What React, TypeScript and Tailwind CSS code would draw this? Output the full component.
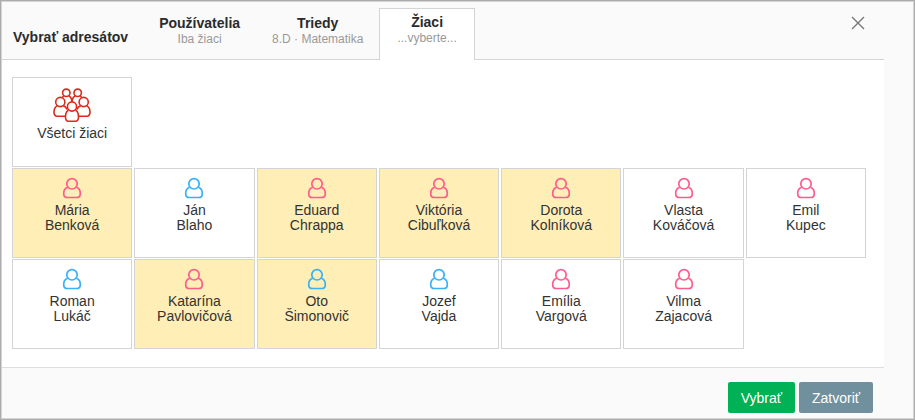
import { useState } from 'react'

type Student = {
  first: string
  last: string
  color: string
  selected: boolean
}

const PINK = '#ff5c8d'
const BLUE = '#38b1f5'

const initialStudents: Student[] = [
  { first: 'Mária', last: 'Benková', color: PINK, selected: true },
  { first: 'Ján', last: 'Blaho', color: BLUE, selected: false },
  { first: 'Eduard', last: 'Chrappa', color: PINK, selected: true },
  { first: 'Viktória', last: 'Cibuľková', color: PINK, selected: true },
  { first: 'Dorota', last: 'Kolníková', color: PINK, selected: true },
  { first: 'Vlasta', last: 'Kováčová', color: PINK, selected: false },
  { first: 'Emil', last: 'Kupec', color: PINK, selected: false },
  { first: 'Roman', last: 'Lukáč', color: BLUE, selected: false },
  { first: 'Katarína', last: 'Pavlovičová', color: PINK, selected: true },
  { first: 'Oto', last: 'Šimonovič', color: BLUE, selected: true },
  { first: 'Jozef', last: 'Vajda', color: BLUE, selected: false },
  { first: 'Emília', last: 'Vargová', color: PINK, selected: false },
  { first: 'Vilma', last: 'Zajacová', color: PINK, selected: false },
]

const tabs = [
  { title: 'Používatelia', subtitle: 'Iba žiaci' },
  { title: 'Triedy', subtitle: '8.D · Matematika' },
  { title: 'Žiaci', subtitle: '...vyberte...' },
]

export default function App() {
  const [students, setStudents] = useState(initialStudents)
  const [active, setActive] = useState(2)

  const toggle = (index: number) => {
    setStudents(students.map((s, i) => (i === index ? { ...s, selected: !s.selected } : s)))
  }

  const toggleAll = () => {
    const all = students.every((s) => s.selected)
    setStudents(students.map((s) => ({ ...s, selected: !all })))
  }

  return (
    <div className="min-h-screen border border-[#acacac] font-['Liberation_Sans',Arial,sans-serif] text-sm text-[#333]">
      <div className="flex min-h-[calc(100vh-2px)] flex-col border border-[#d4d4d4] bg-[#fafafa] pr-[29px]">
        <header className="flex h-[58px] items-stretch border-b border-[#d3d4d5]">
          <h1 className="mr-[15px] self-end pb-[14px] pl-[11px] text-sm leading-4 font-bold text-[#292b2c]">
            Vybrať adresátov
          </h1>
          <div role="tablist" className="-mb-px flex items-stretch pt-1.5">
            {tabs.map((tab, i) => (
              <button
                key={tab.title}
                role="tab"
                aria-selected={i === active}
                onClick={() => setActive(i)}
                className={
                  i === active
                    ? 'flex flex-col items-center border border-b-0 border-[#d3d4d5] bg-white px-[17px] pt-[5px]'
                    : 'flex flex-col items-center px-4 pt-[7px]'
                }
              >
                <span className="text-sm leading-4 font-bold text-[#292b2c]">{tab.title}</span>
                <span className="text-xs leading-4 text-[#999]">{tab.subtitle}</span>
              </button>
            ))}
          </div>
          <button aria-label="Zavrieť" className="mt-3.5 mr-[19px] ml-auto self-start">
            <CloseIcon />
          </button>
        </header>

        <main className="flex-1 border-b border-[#dcdddd] bg-white pt-[17px] pr-[18px] pb-[18px] pl-[10px]">
          <div className="grid grid-cols-[repeat(auto-fill,minmax(120px,1fr))] gap-x-0.5 gap-y-px">
            <button
              onClick={toggleAll}
              className="col-start-1 flex h-[90px] flex-col items-center border border-[#d3d4d5] bg-white pt-[10px] leading-[15px]"
            >
              <GroupIcon />
              <span className="mt-[3px]">Všetci žiaci</span>
            </button>
            {students.map((s, i) => (
              <button
                key={s.last}
                aria-pressed={s.selected}
                onClick={() => toggle(i)}
                className={`flex h-[90px] flex-col items-center border border-[#d3d4d5] pt-2 leading-[15px] ${
                  i === 0 ? 'col-start-1' : ''
                } ${s.selected ? 'bg-[#ffeeb5]' : 'bg-white'}`}
              >
                <PersonIcon color={s.color} />
                <span className="mt-1">{s.first}</span>
                <span>{s.last}</span>
              </button>
            ))}
          </div>
        </main>

        <footer className="flex justify-end gap-1 pt-3.5 pr-[11px] pb-[5px] text-white">
          <button className="h-[31px] rounded-xs bg-[#00b156] px-[13px]">Vybrať</button>
          <button className="h-[31px] rounded-xs bg-[#71909e] px-[13px]">Zatvoriť</button>
        </footer>
      </div>
    </div>
  )
}

function CloseIcon() {
  return (
    <svg width="14" height="14" viewBox="0 0 14 14" fill="none" stroke="#777" strokeWidth="1.4">
      <path d="M1 1L13 13M13 1L1 13" />
    </svg>
  )
}

function PersonIcon({ color }: { color: string }) {
  return (
    <svg width="20" height="22" viewBox="0 0 20 22" fill="none" stroke={color} strokeWidth="1.7">
      <circle cx="10" cy="6.8" r="5.2" />
      <path d="M5.6 10.2C2.9 11.2 1.7 13.5 1.7 16.4C1.7 19.4 3 20.5 5.4 20.5H14.6C17 20.5 18.3 19.4 18.3 16.4C18.3 13.5 17.1 11.2 14.4 10.2" />
    </svg>
  )
}

function GroupIcon() {
  return (
    <svg width="38" height="35" viewBox="0 0 38 35" fill="white" stroke="#d92b1c" strokeWidth="1.6">
      <path d="M10.8 7.8C10.2 8.2 9.7 8.8 9.4 9.6M27.2 7.8C27.8 8.2 28.3 8.8 28.6 9.6" fill="none" />
      <path d="M15.7 7.8C17.5 8.6 18.6 10.6 19 13.6M22.3 7.8C20.5 8.6 19.4 10.6 19 13.6" fill="none" />
      <circle cx="13.3" cy="4.8" r="3.7" />
      <circle cx="24.7" cy="4.8" r="3.7" />
      <path d="M4.4 17.6C2 18.8 1 21.4 1 24.3C1 27 2 28.2 4.2 28.2H12.6M10.2 17.6C12.2 18.4 13.4 19.8 14 21.6" />
      <path d="M33.6 17.6C36 18.8 37 21.4 37 24.3C37 27 36 28.2 33.8 28.2H25.4M27.8 17.6C25.8 18.4 24.6 19.8 24 21.6" />
      <circle cx="7.3" cy="14" r="4.6" />
      <circle cx="30.7" cy="14" r="4.6" />
      <path d="M15.5 22.2C13.4 23.2 12.5 25.8 12.5 28.9C12.5 32 13.4 33.2 15.6 33.2H22.4C24.6 33.2 25.5 32 25.5 28.9C25.5 25.8 24.6 23.2 22.5 22.2" />
      <circle cx="19" cy="18.5" r="4.6" />
    </svg>
  )
}
